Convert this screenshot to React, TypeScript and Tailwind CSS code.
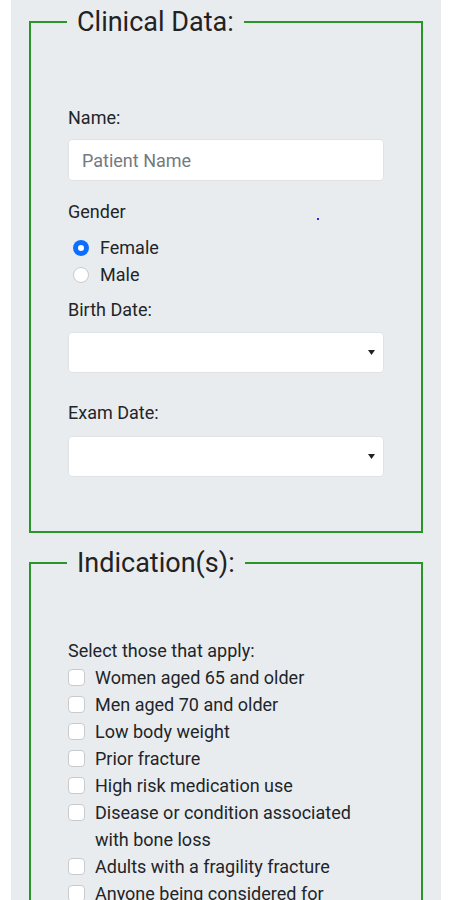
import React from "react";

const items = [
  "Women aged 65 and older",
  "Men aged 70 and older",
  "Low body weight",
  "Prior fracture",
  "High risk medication use",
  "Disease or condition associated with bone loss",
  "Adults with a fragility fracture",
  "Anyone being considered for pharmacologic treatment for osteoporosis",
];

function SelectBox() {
  return (
    <div className="w-full h-[41px] bg-white border border-[#e0e3e6] rounded-[4px] flex items-center justify-end pr-[8px]">
      <svg width="7" height="5" viewBox="0 0 7 5">
        <path d="M0 0 L7 0 L3.5 5 Z" fill="#222" />
      </svg>
    </div>
  );
}

export default function App() {
  return (
    <div className="min-h-screen bg-white" style={{ fontFamily: "Roboto, 'Noto Sans', sans-serif" }}>
      <div className="ml-[11px] w-[430px] min-h-[900px] bg-[#e9ecef] pt-[6px] px-[18px] text-[#212529]">
        <fieldset className="border-2 border-[#2a962a] px-[37px] pt-[66px] pb-[54px]">
          <legend className="-ml-px px-[10px] text-[27px] leading-[32px] text-[#222]">Clinical Data:</legend>
          <label className="block text-[18px] leading-[27px]">Name:</label>
          <input
            className="mt-[8px] block w-full h-[42px] bg-white border border-[#e0e3e6] rounded-[4px] px-[13px] text-[18px] outline-none placeholder:text-[#737a80]"
            placeholder="Patient Name"
          />
          <div className="relative mt-[17px] text-[18px] leading-[27px]">
            Gender
            <span className="absolute left-[249px] top-[20px] w-[2px] h-[2px] bg-[#2b2bd0]" />
          </div>
          <div className="mt-[9px] pl-[5px] text-[18px] leading-[27px]">
            <div className="flex items-center gap-[11px]">
              <span className="w-[16px] h-[16px] rounded-full bg-white shadow-[inset_0_0_0_5px_#0d6efd]" />
              <span>Female</span>
            </div>
            <div className="flex items-center gap-[11px]">
              <span className="w-[16px] h-[16px] rounded-full bg-white border border-[#c8cbce]" />
              <span>Male</span>
            </div>
          </div>
          <div className="mt-[8px] text-[18px] leading-[27px]">Birth Date:</div>
          <div className="mt-[9px]">
            <SelectBox />
          </div>
          <div className="mt-[26px] text-[18px] leading-[27px]">Exam Date:</div>
          <div className="mt-[10px]">
            <SelectBox />
          </div>
        </fieldset>

        <fieldset className="mt-[14px] border-2 border-[#2a962a] px-[37px] pt-[58px] pb-[40px]">
          <legend className="-ml-px px-[10px] text-[27px] leading-[32px] text-[#222]">Indication(s):</legend>
          <div className="text-[18px] leading-[27px]">Select those that apply:</div>
          <div className="flex flex-col">
            {items.map((t) => (
              <div key={t} className="flex items-start gap-[10px] text-[18px] leading-[27px]">
                <span className="mt-[5px] shrink-0 w-[17px] h-[17px] rounded-[4px] bg-white border border-[#c8cbce]" />
                <span>{t}</span>
              </div>
            ))}
          </div>
        </fieldset>
      </div>
    </div>
  );
}
